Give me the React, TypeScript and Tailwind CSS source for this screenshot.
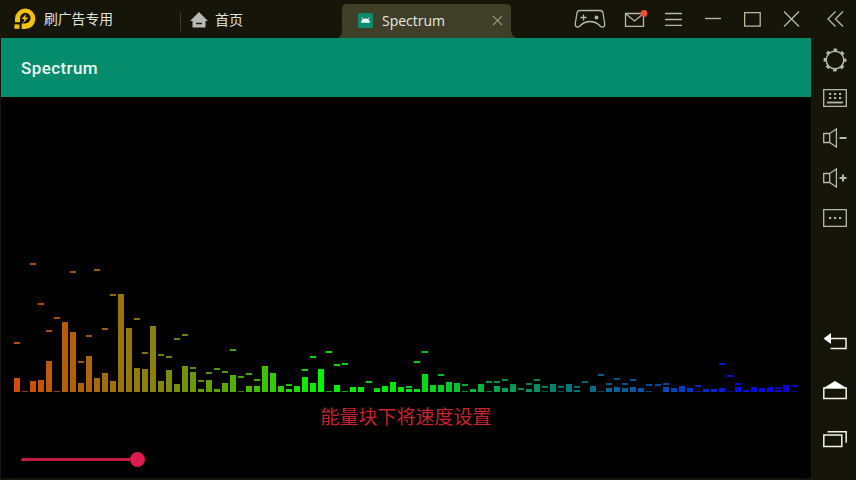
import React from "react";

// Height of each energy bar and the y coordinate of its falling peak (0 = no peak).
const BANDS: [number, number][] = [
  [14, 343.3], [1, 0], [11, 264.3], [12, 304.3], [31, 331], [1, 317.7], [70, 0], [60, 272.3], [9, 362], [36, 336.3],
  [14, 270], [19, 329], [11, 295.3], [98, 0], [64, 0], [24, 319], [23, 353.3], [66, 0], [11, 355.3], [22, 356.7],
  [8, 339], [26, 334.7], [20, 367.7], [3, 381], [12, 373], [3, 369], [9, 371.7], [17, 350], [1, 376.7], [6, 374.3],
  [6, 380], [26, 0], [19, 0], [6, 0], [3, 385.3], [6, 0], [15, 370], [9, 356.7], [23, 0], [1, 352.3],
  [7, 365.3], [1, 364.3], [5, 0], [5, 0], [0, 382.3], [2, 388.5], [6, 0], [10, 0], [5, 0], [3, 387.3],
  [3, 362.3], [18, 352], [7, 0], [7, 375.3], [10, 0], [9, 0], [1, 385.3], [3, 0], [8, 0], [1, 382.3],
  [6, 382.3], [4, 380], [6, 385], [0, 388.7], [3, 383.7], [8, 380], [1, 386.7], [8, 0], [1, 386.7], [8, 0],
  [2, 386.7], [0, 382.3], [6, 0], [1, 375.3], [4, 383.7], [5, 378.7], [4, 383.7], [5, 380], [4, 0], [1, 385.3],
  [0, 385.3], [5, 383.7], [4, 0], [6, 0], [4, 0], [1, 386.3], [3, 0], [3, 0], [4, 364.3], [1, 376.3],
  [5, 383.7], [2, 0], [5, 0], [4, 0], [5, 0], [2, 388], [7, 0], [1, 386],
];

const STOPS: [number, number[]][] = [
  [0, [210, 75, 8]], [10, [168, 104, 12]], [18, [132, 134, 10]], [24, [98, 160, 8]], [31, [60, 195, 0]],
  [38, [0, 245, 0]], [50, [0, 226, 10]], [60, [0, 168, 75]], [70, [0, 115, 125]], [80, [0, 80, 180]],
  [90, [0, 15, 235]], [97, [15, 0, 215]],
];

function bandColor(i: number) {
  const k = Math.max(1, STOPS.findIndex((s) => s[0] >= i));
  const [a, ca] = STOPS[k - 1];
  const [b, cb] = STOPS[k];
  const t = (i - a) / (b - a);
  return `rgb(${ca.map((c, n) => Math.round(c + (cb[n] - c) * t)).join(",")})`;
}

function Spectrum() {
  return (
    <svg width="810" height="302" viewBox="1 97 810 302" className="block shrink-0">
      {BANDS.map(([h, peak], i) => {
        const x = Math.round(13.7 + i * 8.01);
        const color = bandColor(i);
        return (
          <g key={i} fill={color}>
            {h > 0 && <rect x={x} y={392 - h} width="6" height={h} opacity={h === 1 ? 0.7 : 1} />}
            {peak > 0 && <rect x={x} y={Math.round(peak - 1)} width="6" height="2" opacity="0.9" />}
          </g>
        );
      })}
    </svg>
  );
}

function Icon({ w, h, className = "", children }: { w: number; h: number; className?: string; children: React.ReactNode }) {
  return (
    <svg width={w} height={h} viewBox={`0 0 ${w} ${h}`} fill="none" stroke="#b9b9a6" strokeWidth="1.3" className={`shrink-0 ${className}`}>
      {children}
    </svg>
  );
}

function TitleBar() {
  return (
    <header className="flex h-[38px] w-full items-center">
      <svg width="24" height="24" viewBox="0 0 24 24" className="ml-[13px] mt-px shrink-0">
        <path d="M2 14.2V10.5A10.2 10.2 0 1 1 12 21H8.7V15.4H12A5.3 5.3 0 1 0 7 10.2V14.2Z" fill="#f4c20d" />
        <path d="M1.4 16.4h5v4.4h-5z" fill="#f4c20d" />
        <path d="M13.2 5.8 8.5 11h3l-1.5 4.2L15.3 9.500h-3.200z" fill="#f4c20d" />
      </svg>
      <span className="ml-[7px] w-[136px] text-[13.800px] leading-none whitespace-nowrap text-[#e3e3dc]">刷广告专用</span>
      <span className="mt-1 h-[19px] w-px bg-[#3a3a2c]" />
      <svg width="18" height="16" viewBox="0 0 18 16" className="ml-[9px] mt-px shrink-0">
        <path d="M9 0 18 9H15.500V15.500H2.500V9H0Z" fill="#b8b8b4" />
        <path d="M6 11.500h6" stroke="#222219" strokeWidth="1.5" />
      </svg>
      <span className="ml-[7px] w-[123px] text-[14px] leading-none text-[#e3e3dc]">首页</span>
      <div className="flex h-[38px] w-[178px] items-end">
        <div className="relative flex h-[34px] w-full items-center">
          <svg width="178" height="34" viewBox="0 0 178 34" className="absolute inset-0">
            <path d="M0 34Q4 31 4 26V5Q4 0 9 0H168Q173 0 173 5V26Q173 31 178 34Z" fill="#3f3e26" />
          </svg>
          <svg width="15" height="15" viewBox="0 0 15 15" className="relative -mt-[2px] ml-[20px] shrink-0">
            <rect width="15" height="15" rx="1.5" fill="#0c8b70" />
            <path d="M3 9.800C3 4.200 12 4.200 12 9.800Z" fill="#f2f6f3" />
            <path d="m4 4.300 1.200 2M11 4.300l-1.200 2" stroke="#f2f6f3" strokeWidth="0.8" />
          </svg>
          <span className="relative ml-[9px] w-[110px] font-['Open_Sans'] text-[14px] leading-none text-[#e8e8e2]">Spectrum</span>
          <Icon w={11} h={11} className="relative -mt-[2px]"><path d="m1 1 9 9M10 1 1 10" stroke="#8f8f7c" /></Icon>
        </div>
      </div>
      <Icon w={32} h={20} className="ml-[58px]">
        <path d="M6 1.500H26Q28.500 1.500 29 4L30.700 14.500Q31 18 28.500 18.200Q26.500 18.200 24.500 15.500Q21 12.500 16 12.500T7.500 15.500Q5.500 18.200 3.500 18.200Q1 18 1.300 14.500L3 4Q3.500 1.500 6 1.500Z" />
        <path d="M6.500 8.500h6M9.500 5.500v6" />
        <circle cx="22.500" cy="8.500" r="1.300" fill="#b9b9a6" />
      </Icon>
      <Icon w={24} h={18} className="ml-[18px] -mt-[3px]">
        <path d="M1.500 4.500h18v13h-18z" />
        <path d="m2 5 8.500 7L19 5" />
        <circle cx="20" cy="4.500" r="3.400" fill="#f05030" stroke="none" />
      </Icon>
      <Icon w={17} h={14} className="ml-[17px] -mt-px"><path d="M0 1.500h17M0 7.500h17M0 13.300h17" /></Icon>
      <Icon w={16} h={14} className="ml-[23px]"><path d="M0 6.500h16" /></Icon>
      <Icon w={17} h={16} className="ml-[23px]"><path d="M.6 1.600h15.600v13.600H.6z" /></Icon>
      <Icon w={17} h={16} className="ml-[22px]"><path d="M1 .5 16 15.500M16 .5 1 15.500" /></Icon>
      <Icon w={18} h={16} className="ml-[26px]"><path d="M9.500 .5 2 8l7.500 7.500M17 .5 9.500 8l7.500 7.500" /></Icon>
    </header>
  );
}

function SideBar() {
  return (
    <aside className="flex w-[45px] flex-col items-center pt-[10px] pl-[3px]">
      <Icon w={24} h={24}>
        <circle cx="12" cy="12" r="8.800" strokeWidth="1.500" />
        <circle cx="12" cy="12" r="10.100" strokeWidth="2.600" strokeDasharray="3.600 4.332" strokeDashoffset="1.800" />
      </Icon>
      <Icon w={24} h={18} className="mt-[17px]">
        <path d="M.7 .7h22.600v16.600H.7z" />
        <path d="M6 5h2.200M11 5h2.200M16 5h2.200M6 9h2.200M11 9h2.200M16 9h2.200" strokeWidth="2" />
        <path d="M4 13.500h16" strokeWidth="1.800" />
      </Icon>
      <Icon w={24} h={20} className="mt-[21px]">
        <path d="M.7 5.500h6v9h-6zM6.700 5.500 13.400 1v18L6.700 14.500" />
        <path d="M16.500 10h7" strokeWidth="2" />
      </Icon>
      <Icon w={24} h={20} className="mt-[20px]">
        <path d="M.7 5.500h6v9h-6zM6.700 5.500 13.400 1v18L6.700 14.500" />
        <path d="M16.500 10h7M20 6.500v7" strokeWidth="2" />
      </Icon>
      <Icon w={24} h={18} className="mt-[21px]">
        <path d="M.7 .7h22.600v16.600H.7z" />
        <path d="M6 9h2.200M11 9h2.200M16 9h2.200" strokeWidth="2" />
      </Icon>
      <Icon w={24} h={17} className="mt-[106px]">
        <path d="M8 5.500h15v10H7.500" stroke="#f2f2e8" strokeWidth="1.500" />
        <path d="M.5 5.500 8 0v11z" fill="#fff" stroke="none" />
      </Icon>
      <Icon w={24} h={20} className="mt-[30px]">
        <path d="M.8 8h22.400v10.500H.8z" stroke="#f2f2e8" strokeWidth="1.500" />
        <path d="M.5 8 12 1l11.500 7z" fill="#fff" stroke="none" />
      </Icon>
      <Icon w={24} h={18} className="mt-[30px]">
        <path d="M.8 5h18v11.500h-18z" stroke="#f2f2e8" strokeWidth="1.500" />
        <path d="M4.500 1.800h18.700v11" stroke="#f2f2e8" strokeWidth="1.500" />
      </Icon>
    </aside>
  );
}

export default function App() {
  return (
    <div className="flex h-[480px] w-[856px] flex-col overflow-hidden bg-[#15150a] font-['Noto_Sans_CJK_SC',sans-serif]">
      <TitleBar />
      <div className="flex flex-1">
        <main className="ml-px flex h-[440px] w-[810px] flex-col bg-black">
          <div className="flex h-[59px] shrink-0 items-center bg-[#048c6c] pl-[20px]">
            <h1 className="mt-px font-[Roboto] text-[17px] leading-none font-medium tracking-[0.4px] text-[#f0faf6]">Spectrum</h1>
          </div>
          <Spectrum />
          <p className="h-[36px] shrink-0 text-center text-[19px] leading-[34px] text-[#c9222c]">能量块下将速度设置</p>
          <div className="mt-[16px] ml-[20px] flex h-[16px] items-center">
            <span className="h-[3px] w-[109px] rounded-l-full bg-[#bf1b3c]" />
            <span className="size-[15px] rounded-full bg-[#dc1c4c]" />
          </div>
        </main>
        <SideBar />
      </div>
    </div>
  );
}
